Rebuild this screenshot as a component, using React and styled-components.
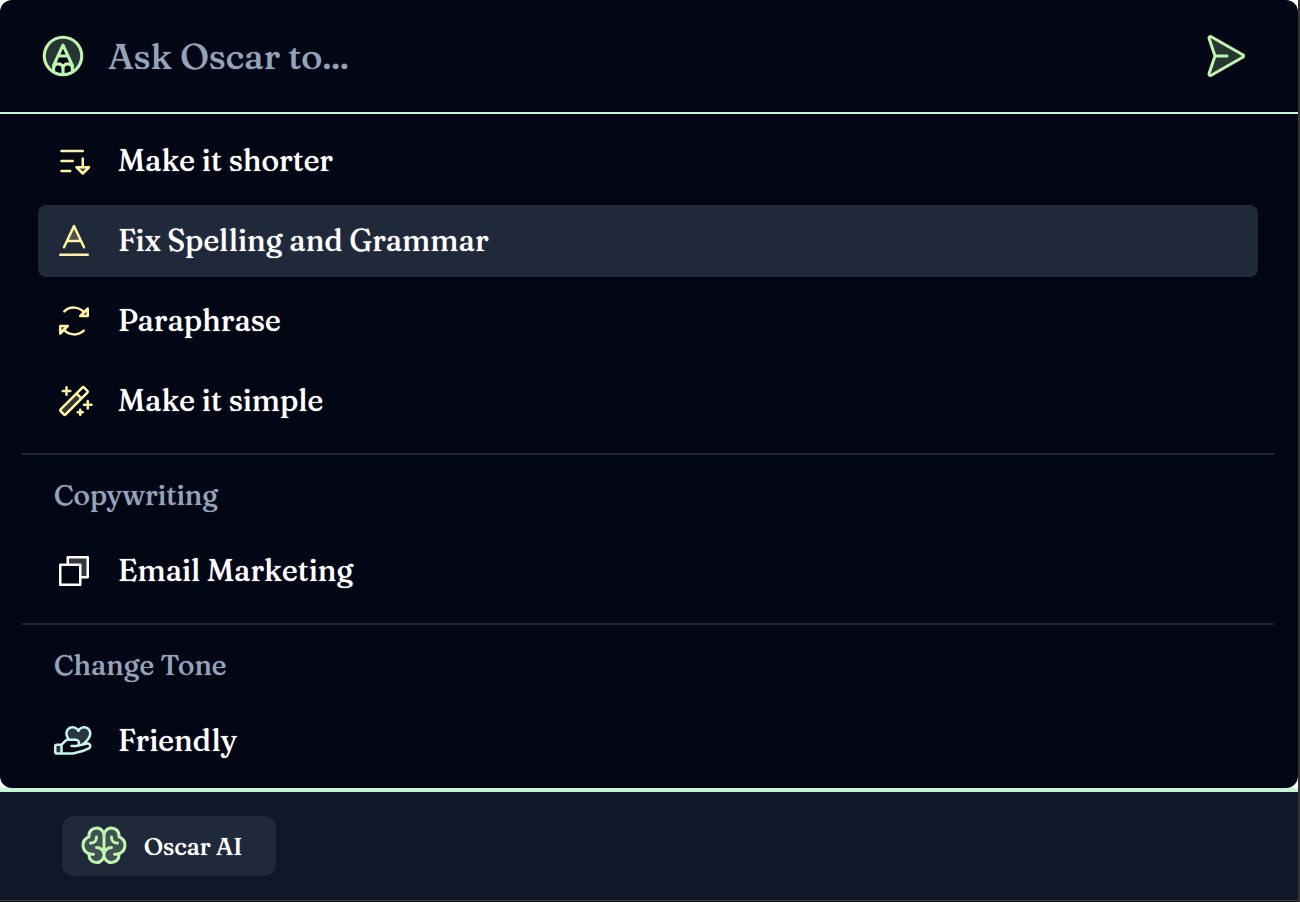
import React from "react";
import styled, { createGlobalStyle } from "styled-components";
import {
  PiPencilCircleDuotone,
  PiPaperPlaneRightDuotone,
  PiTextAUnderlineDuotone,
  PiMagicWandDuotone,
  PiCopyDuotone,
  PiHandHeartDuotone,
  PiBrainDuotone,
} from "react-icons/pi";

const GlobalStyle = createGlobalStyle`
  *, *::before, *::after { box-sizing: border-box; }
  body { margin: 0; background: #2b2b2b; }
  button, input { font: inherit; color: inherit; }
`;

const Frame = styled.main`
  display: flex;
  flex-direction: column;
  min-height: 100vh;
  background: #101729;
  border-right: 2px solid #333333;
  border-bottom: 1px solid #0a0a0a;
  color: #ffffff;
  font-family: Fraunces, "Liberation Serif", serif;
  font-weight: 500;
`;

const PanelBackdrop = styled.div`
  background: #ffffff;
  border-bottom: 4px solid #c6f6d5;
`;

const Panel = styled.section`
  background: #020615;
  border-radius: 12px;
`;

const PromptBar = styled.form`
  display: flex;
  align-items: center;
  gap: 20px;
  height: 114px;
  padding: 0 50px 0 38px;
  border-bottom: 2px solid #c6f6d5;
  color: #bff5b1;
`;

const PromptInput = styled.input`
  flex: 1;
  min-width: 0;
  height: 60px;
  padding: 0;
  border: 0;
  outline: 0;
  background: transparent;
  color: #ffffff;
  font-size: 36px;

  &::placeholder {
    color: #94a3b8;
    opacity: 1;
    text-shadow: 0 0 1px #94a3b8;
  }
`;

const SendButton = styled.button`
  display: flex;
  padding: 0;
  border: 0;
  background: transparent;
  color: inherit;
  cursor: pointer;
`;

const Group = styled.section`
  margin: 0 24px 0 22px;
  padding: ${(p) => (p.$first ? 11 : 0)}px 16px ${(p) => (p.$last ? 11 : 16)}px;
  border-top: ${(p) => (p.$first ? "0" : "2px solid #1e2736")};
`;

const GroupTitle = styled.h2`
  margin: 0;
  padding: 0 16px;
  font-size: 28px;
  font-weight: 500;
  line-height: 80px;
  color: #94a3b8;
  text-shadow: 0 0 1px currentColor;
`;

const ActionList = styled.ul`
  display: flex;
  flex-direction: column;
  gap: 8px;
  margin: 0;
  padding: 0;
  list-style: none;
`;

const Action = styled.button`
  display: flex;
  align-items: center;
  gap: 24px;
  width: 100%;
  height: 72px;
  padding: 0 16px;
  border: 0;
  border-radius: 8px;
  background: ${(p) => (p.$active ? "#20293a" : "transparent")};
  font-size: 30px;
  line-height: 40px;
  text-align: left;
  text-shadow: 0 0 1px currentColor;
  cursor: pointer;

  svg {
    flex: none;
    color: ${(p) => p.$tint};
  }
`;

const Footer = styled.footer`
  flex: 1;
  padding: 24px 62px;
  border-bottom: 1px solid #444444;
`;

const AiButton = styled.button`
  display: flex;
  align-items: center;
  gap: 16px;
  height: 60px;
  padding: 0 34px 0 18px;
  border: 0;
  border-radius: 12px;
  background: #20293a;
  font-size: 24px;
  text-shadow: 0 0 1px currentColor;
  cursor: pointer;

  svg {
    color: #bff5b1;
  }
`;

const LineIcon = styled.svg.attrs({
  viewBox: "0 0 256 256",
  width: 40,
  height: 40,
  fill: "none",
  stroke: "currentColor",
  strokeWidth: 16,
  strokeLinecap: "round",
  strokeLinejoin: "round",
  "aria-hidden": true,
})``;

const ShortenIcon = () => (
  <LineIcon>
    <path d="M48 64H184M48 128H120M48 192H104M184 112V168" />
    <path d="M144 168H224L184 208Z" fill="currentColor" fillOpacity="0.2" />
  </LineIcon>
);

const CycleIcon = () => (
  <LineIcon>
    <path d="M66 66A88 88 0 0 1 192 72M190 190A88 88 0 0 1 64 184" />
    <path d="M216 48V96H168ZM40 208V160H88Z" fill="currentColor" fillOpacity="0.2" />
  </LineIcon>
);

const groups = [
  {
    actions: [
      { label: "Make it shorter", icon: ShortenIcon, tint: "#fef3a8" },
      { label: "Fix Spelling and Grammar", icon: PiTextAUnderlineDuotone, tint: "#fef3a8", active: true },
      { label: "Paraphrase", icon: CycleIcon, tint: "#fef3a8" },
      { label: "Make it simple", icon: PiMagicWandDuotone, tint: "#fef3a8" },
    ],
  },
  {
    title: "Copywriting",
    actions: [{ label: "Email Marketing", icon: PiCopyDuotone, tint: "#ffffff" }],
  },
  {
    title: "Change Tone",
    actions: [{ label: "Friendly", icon: PiHandHeartDuotone, tint: "#c8f5f0" }],
  },
];

export default function App() {
  return (
    <>
      <GlobalStyle />
      <Frame>
        <PanelBackdrop>
          <Panel>
            <PromptBar onSubmit={(e) => e.preventDefault()}>
              <PiPencilCircleDuotone size={50} aria-hidden="true" />
              <PromptInput type="text" aria-label="Ask Oscar" placeholder="Ask Oscar to..." />
              <SendButton type="submit" aria-label="Send">
                <PiPaperPlaneRightDuotone size={48} />
              </SendButton>
            </PromptBar>
            {groups.map((group, i) => (
              <Group key={group.title || "edit"} $first={i === 0} $last={i === groups.length - 1}>
                {group.title && <GroupTitle>{group.title}</GroupTitle>}
                <ActionList>
                  {group.actions.map(({ label, icon: Icon, tint, active }) => (
                    <li key={label}>
                      <Action type="button" $tint={tint} $active={active}>
                        <Icon size={40} aria-hidden="true" />
                        {label}
                      </Action>
                    </li>
                  ))}
                </ActionList>
              </Group>
            ))}
          </Panel>
        </PanelBackdrop>
        <Footer>
          <AiButton type="button">
            <PiBrainDuotone size={48} aria-hidden="true" />
            Oscar AI
          </AiButton>
        </Footer>
      </Frame>
    </>
  );
}
